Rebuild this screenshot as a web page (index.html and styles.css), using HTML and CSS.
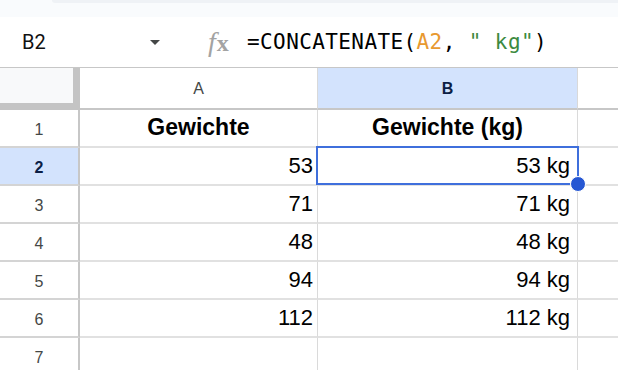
FILE: index.html
```html
<!DOCTYPE html>
<html>
<head>
<meta charset="utf-8">
<link rel="stylesheet" href="styles.css">
</head>
<body>
<div class="topstrip"><div class="topstrip-inner"></div></div>
<div class="formula-bar">
  <div class="namebox">B2</div>
  <div class="caret"></div>
  <div class="fx"><span class="fx-f">f</span><span class="fx-x">x</span></div>
  <div class="formula">=CONCATENATE(<span class="ref">A2</span>, <span class="str">" kg"</span>)</div>
</div>
<div class="grid">
  <div class="corner"></div>
  <div class="colhead">A</div>
  <div class="colhead sel">B</div>
  <div class="colhead last"></div>

  <div class="rowhead">1</div>
  <div class="cell center bold">Gewichte</div>
  <div class="cell center bold">Gewichte (kg)</div>
  <div class="cell last"></div>

  <div class="rowhead sel">2</div>
  <div class="cell">53</div>
  <div class="cell b active">53 kg<div class="selection"><div class="handle"></div></div></div>
  <div class="cell last"></div>

  <div class="rowhead">3</div>
  <div class="cell">71</div>
  <div class="cell b">71 kg</div>
  <div class="cell last"></div>

  <div class="rowhead">4</div>
  <div class="cell">48</div>
  <div class="cell b">48 kg</div>
  <div class="cell last"></div>

  <div class="rowhead">5</div>
  <div class="cell">94</div>
  <div class="cell b">94 kg</div>
  <div class="cell last"></div>

  <div class="rowhead">6</div>
  <div class="cell">112</div>
  <div class="cell b">112 kg</div>
  <div class="cell last"></div>

  <div class="rowhead">7</div>
  <div class="cell"></div>
  <div class="cell b"></div>
  <div class="cell last"></div>
</div>
</body>
</html>
```
FILE: styles.css
```css
html, body {
  margin: 0;
  padding: 0;
  background: #ffffff;
  overflow: hidden;
}
body {
  width: 618px;
  height: 370px;
  font-family: "Liberation Sans", Arial, sans-serif;
  color: #000;
}
.topstrip {
  height: 17px;
  background: #f9fbfd;
  display: flex;
  justify-content: flex-end;
}
.topstrip-inner {
  width: 566px;
  height: 3px;
  background: #eff2f6;
  border-bottom-left-radius: 12px;
}
.formula-bar {
  height: 50px;
  display: flex;
  align-items: center;
}
.namebox {
  font-family: Roboto, "Liberation Sans", sans-serif;
  font-size: 20px;
  width: 128px;
  padding-left: 22px;
  color: #111;
}
.caret {
  width: 0;
  height: 0;
  border-left: 5px solid transparent;
  border-right: 5px solid transparent;
  border-top: 5px solid #444746;
  margin-top: 1px;
}
.fx {
  margin-left: 48px;
  width: 39px;
  font-family: "Liberation Serif", serif;
  font-size: 28px;
  color: #a3a3a3;
  display: flex;
  align-items: baseline;
}
.fx-f {
  font-style: italic;
}
.fx-x {
  font-weight: bold;
  font-size: 24px;
  margin-left: 1px;
}
.formula {
  font-family: "DejaVu Sans Mono", monospace;
  font-size: 21px;
  letter-spacing: 0.4px;
  color: #000;
}
.ref { color: #e8992f; }
.str { color: #3c8a3f; }

.grid {
  display: grid;
  grid-template-columns: 80px 238px 260px 1fr;
  grid-template-rows: 42px repeat(7, 38px);
  border-top: 1px solid #c7c7c7;
}
.corner {
  background: #f8f9fa;
  border-right: 7px solid #c4c4c4;
  border-bottom: 7px solid #c4c4c4;
  box-sizing: border-box;
}
.colhead {
  display: flex;
  align-items: center;
  justify-content: center;
  font-size: 16px;
  color: #444746;
  border-right: 1px solid #d9d9d9;
  border-bottom: 2px solid #c7c7c7;
  padding-top: 1px;
  box-sizing: border-box;
}
.colhead.sel {
  background: #d3e3fd;
  color: #0b1e45;
  font-weight: bold;
}
.colhead.last { border-right: none; }
.rowhead {
  display: flex;
  align-items: center;
  justify-content: center;
  font-size: 16px;
  color: #444746;
  border-right: 2px solid #c7c7c7;
  border-bottom: 2px solid #d4d4d4;
  box-sizing: border-box;
  padding-top: 4px;
}
.rowhead.sel {
  background: #d3e3fd;
  color: #0b1e45;
  font-weight: bold;
}
.cell {
  position: relative;
  display: flex;
  align-items: flex-end;
  justify-content: flex-end;
  padding: 0 4px 5px 0;
  font-size: 22px;
  border-right: 1px solid #dadada;
  border-bottom: 2px solid #e1e1e1;
  box-sizing: border-box;
}
.cell.b { padding-right: 7px; }
.cell.center { justify-content: center; padding-right: 0; }
.cell.bold { font-weight: bold; font-size: 23px; }
.cell.last { border-right: none; }
.cell.active { z-index: 2; }
.selection {
  position: absolute;
  top: -2px;
  left: -2px;
  right: -2px;
  bottom: -1px;
  border: 2.5px solid #3f6fdc;
}
.handle {
  position: absolute;
  right: -9px;
  bottom: -9px;
  width: 14px;
  height: 14px;
  border-radius: 50%;
  background: #2657d3;
  border: 1px solid #fff;
}
```
